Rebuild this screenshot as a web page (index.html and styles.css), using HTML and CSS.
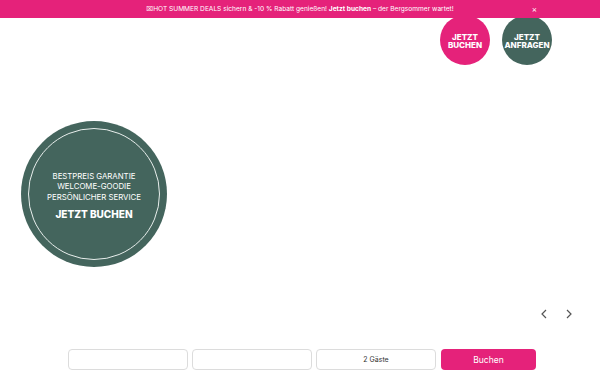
FILE: index.html
```html
<!DOCTYPE html>
<html lang="de">
<head>
    <meta charset="UTF-8">
    <meta name="viewport" content="width=device-width, initial-scale=1.0">
    <title>Bergsommer</title>
    <link rel="stylesheet" href="styles.css">
</head>
<body>

<div class="topbar">
    <span class="topbar-text">&#8999;HOT SUMMER DEALS sichern &amp; -10 % Rabatt genießen! <b>Jetzt buchen</b> – der Bergsommer wartet!</span>
    <span class="topbar-close">×</span>
</div>

<header class="header">
    <a class="cta cta-pink" href="#">JETZT<br>BUCHEN</a>
    <a class="cta cta-green" href="#">JETZT<br>ANFRAGEN</a>
</header>

<section class="hero">
    <div class="badge">
        <div class="badge-ring">
            <p class="badge-list">BESTPREIS GARANTIE<br>WELCOME-GOODIE<br>PERSÖNLICHER SERVICE</p>
            <p class="badge-cta">JETZT BUCHEN</p>
        </div>
    </div>
</section>

<div class="slider-nav">
    <svg class="arrow" width="8" height="10" viewBox="0 0 8 10"><path d="M6 1 L2 5 L6 9" fill="none" stroke="#555" stroke-width="1.2"/></svg>
    <svg class="arrow" width="8" height="10" viewBox="0 0 8 10"><path d="M2 1 L6 5 L2 9" fill="none" stroke="#555" stroke-width="1.2"/></svg>
</div>

<form class="booking">
    <div class="field"></div>
    <div class="field"></div>
    <div class="field">2 Gäste</div>
    <button type="button" class="book-btn">Buchen</button>
</form>

</body>
</html>
```

FILE: styles.css
```css
* {
    box-sizing: border-box;
}

html, body {
    margin: 0;
    height: 100%;
    overflow: hidden;
    background-color: #fff;
    font-family: "Inter", "Open Sans", sans-serif;
}

.topbar {
    position: relative;
    z-index: 2;
    height: 18px;
    background-color: #e5227a;
    color: #fff;
    display: flex;
    align-items: center;
    justify-content: center;
    font-size: 6.6px;
}

.topbar-text b {
    font-weight: 700;
}

.topbar-close {
    position: absolute;
    right: 63px;
    top: 4px;
    font-size: 8px;
}

.header {
    display: flex;
    justify-content: flex-end;
    gap: 12px;
    padding-right: 48px;
    margin-top: -3px;
}

.cta {
    width: 50px;
    height: 50px;
    border-radius: 50%;
    display: flex;
    align-items: center;
    justify-content: center;
    text-align: center;
    color: #fff;
    text-decoration: none;
    font-size: 8px;
    font-weight: 800;
    line-height: 8.5px;
    padding-top: 2px;
}

.cta-pink {
    background-color: #e5227a;
}

.cta-green {
    background-color: #44655d;
}

.hero {
    padding-left: 21px;
    margin-top: 56px;
}

.badge {
    width: 146px;
    height: 146px;
    border-radius: 50%;
    background-color: #44655d;
    padding: 7px;
}

.badge-ring {
    width: 100%;
    height: 100%;
    border-radius: 50%;
    border: 1px solid #e8eeec;
    color: #fff;
    text-align: center;
    display: flex;
    flex-direction: column;
    align-items: center;
    justify-content: center;
    padding-top: 3px;
}

.badge-list {
    margin: 0;
    font-size: 7.8px;
    line-height: 10.5px;
}

.badge-cta {
    margin: 6px 0 0;
    font-size: 10px;
    font-weight: 800;
}

.slider-nav {
    display: flex;
    justify-content: flex-end;
    gap: 17px;
    padding-right: 27px;
    margin-top: 42px;
}

.booking {
    display: flex;
    gap: 4px;
    margin: 30px 0 0 68px;
}

.field {
    width: 120px;
    height: 21px;
    border: 1px solid #dcdcdc;
    border-radius: 4px;
    display: flex;
    align-items: center;
    justify-content: center;
    font-size: 7px;
    color: #333;
}

.book-btn {
    width: 95px;
    height: 21px;
    margin-left: 1px;
    border: none;
    border-radius: 4px;
    background-color: #e5227a;
    color: #fff;
    font-family: inherit;
    font-size: 8.5px;
}
```
